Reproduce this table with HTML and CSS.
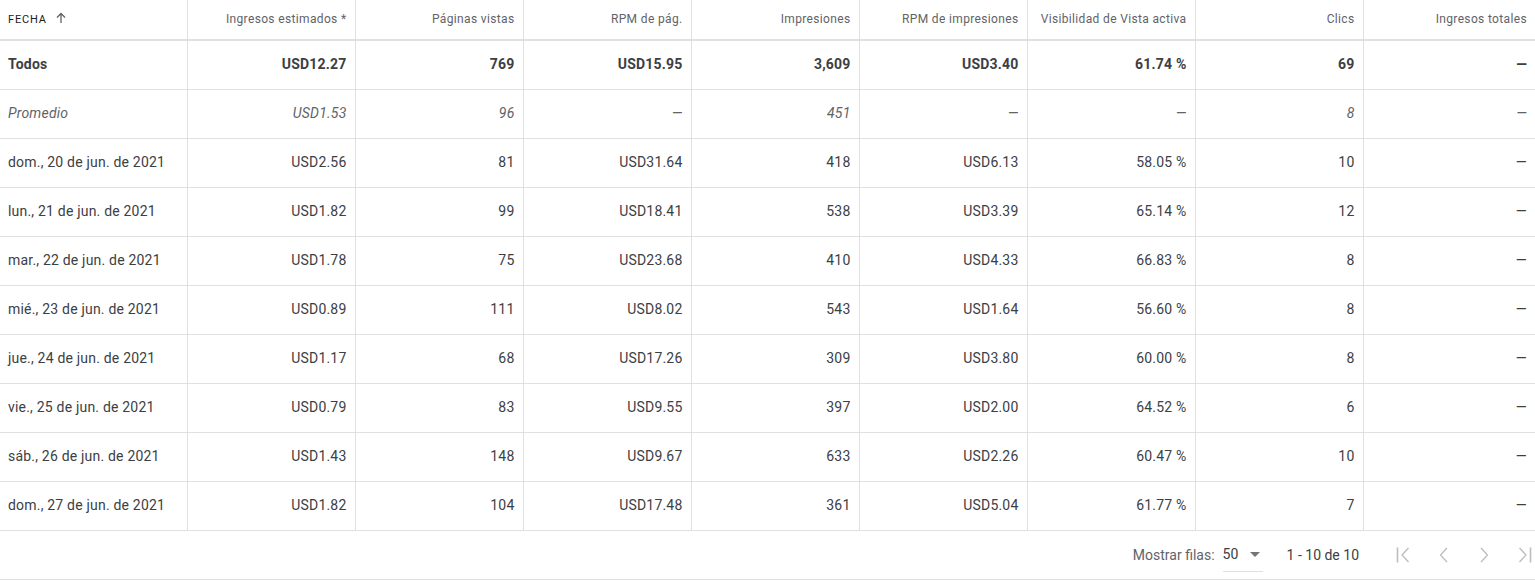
FILE: index.html
```html
<!DOCTYPE html>
<html lang="es">
<head>
<meta charset="utf-8">
<title>Informe</title>
<link rel="stylesheet" href="styles.css">
</head>
<body>
<div class="report">
  <table class="grid">
    <colgroup>
      <col class="c-first">
      <col class="c-num"><col class="c-num"><col class="c-num"><col class="c-num">
      <col class="c-num"><col class="c-num"><col class="c-num"><col class="c-last">
    </colgroup>
    <thead>
      <tr>
        <th class="dim">FECHA <svg class="sort" width="12" height="12" viewBox="0 0 12 12"><path d="M6 11V2M2 5.5L6 1.5l4 4" fill="none" stroke="#5f6368" stroke-width="1.3"/></svg></th>
        <th>Ingresos estimados *</th>
        <th>Páginas vistas</th>
        <th>RPM de pág.</th>
        <th>Impresiones</th>
        <th>RPM de impresiones</th>
        <th>Visibilidad de Vista activa</th>
        <th>Clics</th>
        <th>Ingresos totales</th>
      </tr>
    </thead>
    <tbody>
      <tr class="total">
        <td>Todos</td><td>USD12.27</td><td>769</td><td>USD15.95</td><td>3,609</td><td>USD3.40</td><td>61.74 %</td><td>69</td><td>—</td>
      </tr>
      <tr class="avg">
        <td>Promedio</td><td>USD1.53</td><td>96</td><td>—</td><td>451</td><td>—</td><td>—</td><td>8</td><td>—</td>
      </tr>
      <tr><td>dom., 20 de jun. de 2021</td><td>USD2.56</td><td>81</td><td>USD31.64</td><td>418</td><td>USD6.13</td><td>58.05 %</td><td>10</td><td>—</td></tr>
      <tr><td>lun., 21 de jun. de 2021</td><td>USD1.82</td><td>99</td><td>USD18.41</td><td>538</td><td>USD3.39</td><td>65.14 %</td><td>12</td><td>—</td></tr>
      <tr><td>mar., 22 de jun. de 2021</td><td>USD1.78</td><td>75</td><td>USD23.68</td><td>410</td><td>USD4.33</td><td>66.83 %</td><td>8</td><td>—</td></tr>
      <tr><td>mié., 23 de jun. de 2021</td><td>USD0.89</td><td>111</td><td>USD8.02</td><td>543</td><td>USD1.64</td><td>56.60 %</td><td>8</td><td>—</td></tr>
      <tr><td>jue., 24 de jun. de 2021</td><td>USD1.17</td><td>68</td><td>USD17.26</td><td>309</td><td>USD3.80</td><td>60.00 %</td><td>8</td><td>—</td></tr>
      <tr><td>vie., 25 de jun. de 2021</td><td>USD0.79</td><td>83</td><td>USD9.55</td><td>397</td><td>USD2.00</td><td>64.52 %</td><td>6</td><td>—</td></tr>
      <tr><td>sáb., 26 de jun. de 2021</td><td>USD1.43</td><td>148</td><td>USD9.67</td><td>633</td><td>USD2.26</td><td>60.47 %</td><td>10</td><td>—</td></tr>
      <tr><td>dom., 27 de jun. de 2021</td><td>USD1.82</td><td>104</td><td>USD17.48</td><td>361</td><td>USD5.04</td><td>61.77 %</td><td>7</td><td>—</td></tr>
    </tbody>
  </table>
  <div class="pager">
    <span class="label">Mostrar filas:</span>
    <span class="select">50 <svg width="10" height="5" viewBox="0 0 10 5"><path d="M0 0h10L5 5z" fill="#757575"/></svg></span>
    <span class="range">1 - 10 de 10</span>
    <div class="nav">
      <button class="btn" aria-label="Primera página"><svg width="18" height="18" viewBox="0 0 18 18"><path d="M2.5 1.5v15" stroke="#bdbdbd" stroke-width="1.6" fill="none"/><path d="M13.5 2L7 9l6.5 7" stroke="#bdbdbd" stroke-width="1.3" fill="none"/></svg></button>
      <button class="btn" aria-label="Anterior"><svg width="18" height="18" viewBox="0 0 18 18"><path d="M12 2L5.5 9l6.5 7" stroke="#bdbdbd" stroke-width="1.3" fill="none"/></svg></button>
      <button class="btn" aria-label="Siguiente"><svg width="18" height="18" viewBox="0 0 18 18"><path d="M6 2l6.5 7L6 16" stroke="#bdbdbd" stroke-width="1.3" fill="none"/></svg></button>
      <button class="btn" aria-label="Última página"><svg width="18" height="18" viewBox="0 0 18 18"><path d="M4.5 2l6.5 7-6.5 7" stroke="#bdbdbd" stroke-width="1.3" fill="none"/><path d="M15.5 1.5v15" stroke="#bdbdbd" stroke-width="1.6" fill="none"/></svg></button>
    </div>
  </div>
</div>
</body>
</html>
```

FILE: styles.css
```css
* { box-sizing: border-box; }
html, body { margin: 0; padding: 0; background: #fff; }
body {
  font-family: Roboto, "Liberation Sans", Arial, sans-serif;
  color: #3c4043;
  font-size: 14px;
  letter-spacing: 0.2px;
}
.report { width: 1535px; }
.grid {
  width: 1535px;
  table-layout: fixed;
  border-collapse: collapse;
}
.c-first { width: 187px; }
.c-num { width: 168px; }
.c-last { width: 172px; }
.grid th, .grid td {
  text-align: right;
  padding: 0 8px;
  border-right: 1px solid #e0e0e0;
  white-space: nowrap;
  overflow: hidden;
}
.grid th:last-child, .grid td:last-child { border-right: none; }
.grid th {
  height: 40px;
  font-weight: 400;
  font-size: 12px;
  letter-spacing: 0.35px;
  color: #5f6368;
  border-bottom: 2px solid #e0e0e0;
  padding-bottom: 1px;
}
.grid th:first-child, .grid td:first-child { text-align: left; }
.grid th.dim {
  font-size: 11px;
  letter-spacing: 0.8px;
  color: #202124;
}
.sort { vertical-align: -1px; margin-left: 5px; }
.grid td {
  height: 49px;
  border-bottom: 1px solid #e0e0e0;
  color: #3c4043;
  padding-bottom: 2px;
}
.total td { font-weight: 700; color: #3c4043; }
.avg td { font-style: italic; color: #5f6368; }
.pager {
  height: 49px;
  border-bottom: 1px solid #e0e0e0;
  display: flex;
  align-items: center;
  justify-content: flex-end;
  font-size: 14px;
  letter-spacing: 0;
  color: #5f6368;
}
.label { margin-right: 8px; color: #5f6368; }
.select {
  width: 40px;
  height: 34px;
  display: flex;
  align-items: center;
  gap: 12px;
  color: #3c4043;
  border-bottom: 1px solid #e0e0e0;
  margin-right: 24px;
}
.range { color: #3c4043; margin-right: 33px; }
.nav { display: flex; gap: 16px; margin-right: -1px; }
.btn {
  width: 24px;
  height: 24px;
  border: none;
  background: none;
  padding: 0;
  display: flex;
  align-items: center;
  justify-content: center;
}
```
